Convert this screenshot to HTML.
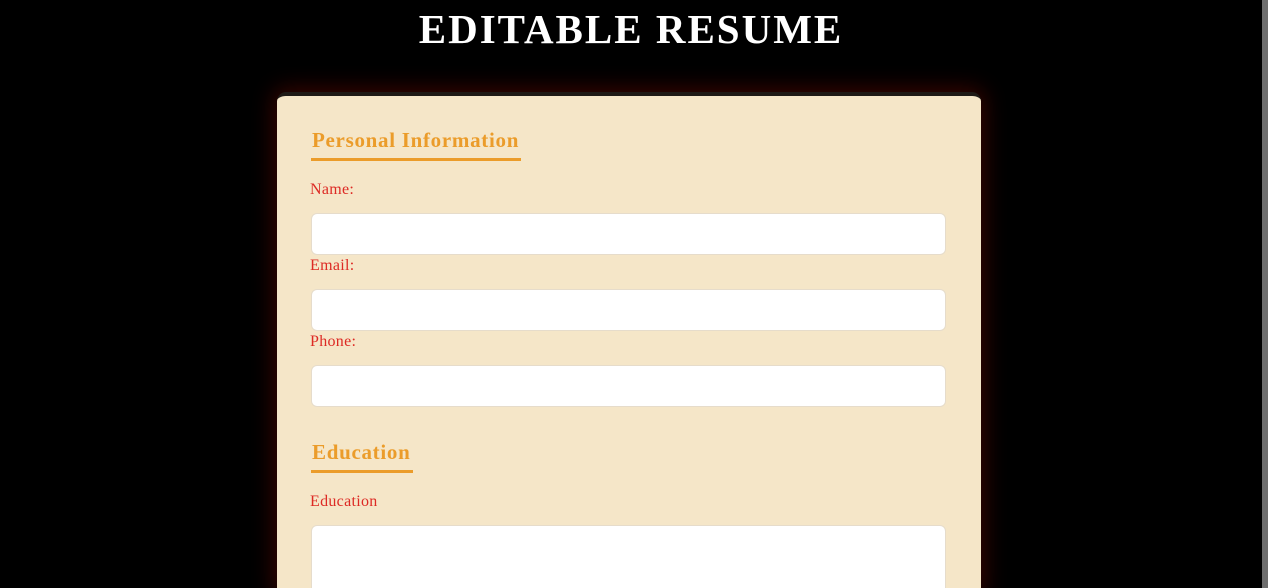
<!DOCTYPE html>
<html><head><style>
html,body{margin:0;padding:0;background:#000;width:1268px;height:588px;overflow:hidden;font-family:"Liberation Serif",serif;position:relative;}
.sb{position:absolute;right:0;top:0;width:6px;height:588px;background:#6e6e6e;}
h1{position:absolute;left:0;width:1262px;top:8px;margin:0;text-align:center;color:#fff;font-size:41px;font-weight:bold;letter-spacing:2px;line-height:42px;}
.card{position:absolute;left:277px;top:92px;width:704px;height:496px;background:#f5e6c8;border-radius:9px 9px 0 0;border-top:4px solid #1e1a16;box-shadow:0 0 22px 4px rgba(120,10,0,0.45);overflow:hidden;}
h2{position:absolute;margin:0;color:#eb9c2a;font-size:21px;font-weight:bold;left:34px;padding:0 2px 6px 1px;border-bottom:3px solid #eb9c2a;line-height:24px;letter-spacing:0.7px;}
.l{position:absolute;left:33px;color:#dd2a24;font-size:16px;line-height:18px;letter-spacing:0.3px;}
.i{position:absolute;left:34px;width:633px;height:40px;background:#fff;border:1px solid #e6dccb;border-radius:6px;}
</style></head><body>
<div class="sb"></div>
<h1>EDITABLE RESUME</h1>
<div class="card">
<h2 style="top:32px">Personal Information</h2>
<div class="l" style="top:85px">Name:</div>
<div class="i" style="top:117px"></div>
<div class="l" style="top:161px">Email:</div>
<div class="i" style="top:193px"></div>
<div class="l" style="top:237px">Phone:</div>
<div class="i" style="top:269px"></div>
<h2 style="top:344px">Education</h2>
<div class="l" style="top:397px">Education</div>
<div class="i" style="top:429px;height:80px"></div>
</div>
</body></html>
